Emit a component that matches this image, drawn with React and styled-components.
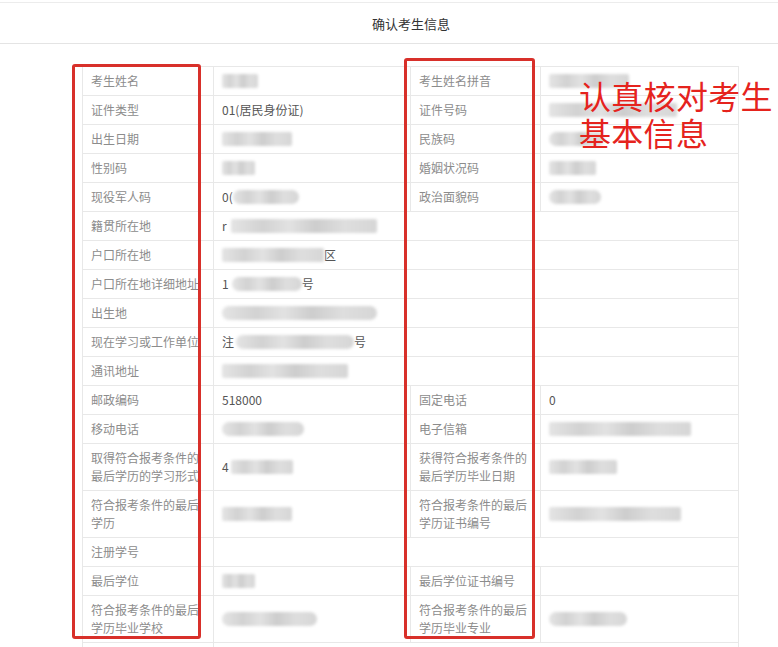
import React from 'react';
import styled, { createGlobalStyle } from 'styled-components';

const GlobalStyle = createGlobalStyle`
  html, body {
    margin: 0;
    padding: 0;
    background: #fff;
    font-family: "Noto Sans CJK SC", "Noto Sans", sans-serif;
  }
  body {
    overflow: hidden;
  }
`;

const Page = styled.div`
  position: relative;
  width: 778px;
  height: 647px;
  overflow: hidden;
  border-top: 1px solid #ececec;
  margin-top: 2px;
`;

const Header = styled.div`
  height: 40px;
  display: flex;
  align-items: center;
  justify-content: center;
  padding-left: 44px;
  border-bottom: 1px solid #e4e4e4;
  font-size: 13px;
  color: #333;
`;

const TableWrap = styled.div`
  padding: 22px 0 0 82px;
`;

const Table = styled.table`
  width: 656px;
  table-layout: fixed;
  border-collapse: collapse;
  border: 1px solid #e8e8e8;
  font-size: 12px;
  line-height: 18px;
`;

const Row = styled.tr`
  height: ${p => (p.$tall ? 47 : 29)}px;
`;

const Cell = styled.td`
  border: 1px solid #e8e8e8;
  padding: 0 10px 0 8px;
  vertical-align: middle;
  color: ${p => (p.$label ? '#8c8c8c' : '#555')};
  white-space: ${p => (p.$label ? 'normal' : 'nowrap')};
  overflow: hidden;
`;

const Blur = styled.span`
  display: inline-block;
  vertical-align: top;
  margin-top: 2px;
  width: ${p => p.$w}px;
  height: 14px;
  margin-left: ${p => p.$ml || 0}px;
  border-radius: ${p => (p.$round ? 8 : 2)}px;
  background: linear-gradient(
    90deg,
    #e4e4e4 0%,
    #d2d2d2 22%,
    #e2e2e2 40%,
    #cdcdcd 58%,
    #dedede 78%,
    #d6d6d6 100%
  );
  filter: blur(1.5px);
`;

const Mark = styled.div`
  position: absolute;
  left: ${p => p.$x}px;
  top: ${p => p.$y}px;
  width: ${p => p.$w}px;
  height: ${p => p.$h}px;
  box-sizing: border-box;
  border: 3px solid #d8302a;
  border-radius: 3px;
  pointer-events: none;
`;

const Note = styled.div`
  position: absolute;
  left: 579px;
  top: 74px;
  font-size: 32px;
  line-height: 37px;
  color: #e5231d;
  letter-spacing: 0.3px;
`;

const B = (w, ml, round) => <Blur $w={w} $ml={ml} $round={round} />;

const rows = [
  ['考生姓名', B(36), '考生姓名拼音', B(80)],
  ['证件类型', '01(居民身份证)', '证件号码', B(128)],
  ['出生日期', B(70), '民族码', B(55, 0, true)],
  ['性别码', B(33), '婚姻状况码', B(47)],
  ['现役军人码', <>0({B(66, 0, true)}</>, '政治面貌码', B(52, 0, true)],
  ['籍贯所在地', <>r{B(146, 4)}</>],
  ['户口所在地', <>{B(102)}区</>],
  ['户口所在地详细地址', <>1{B(70, 3, true)}号</>],
  ['出生地', B(155, 0, true)],
  ['现在学习或工作单位', <>注{B(118, 2, true)}号</>],
  ['通讯地址', B(126)],
  ['邮政编码', '518000', '固定电话', '0'],
  ['移动电话', B(82, 0, true), '电子信箱', B(142)],
  ['取得符合报考条件的最后学历的学习形式', <>4{B(62, 2)}</>, '获得符合报考条件的最后学历毕业日期', B(68), true],
  ['符合报考条件的最后学历', B(70), '符合报考条件的最后学历证书编号', B(132), true],
  ['注册学号', ''],
  ['最后学位', B(33), '最后学位证书编号', ''],
  ['符合报考条件的最后学历毕业学校', B(95, 0, true), '符合报考条件的最后学历毕业专业', B(78, 0, true), true],
  ['', '']
];

export default function App() {
  return (
    <>
      <GlobalStyle />
      <Page>
        <Header>确认考生信息</Header>
        <TableWrap>
          <Table>
            <colgroup>
              <col style={{ width: 131 }} />
              <col style={{ width: 197 }} />
              <col style={{ width: 130 }} />
              <col style={{ width: 198 }} />
            </colgroup>
            <tbody>
              {rows.map((r, i) => (
                <Row key={i} $tall={r[4]}>
                  <Cell $label>{r[0]}</Cell>
                  {r.length > 2 ? (
                    <>
                      <Cell>{r[1]}</Cell>
                      <Cell $label>{r[2]}</Cell>
                      <Cell>{r[3]}</Cell>
                    </>
                  ) : (
                    <Cell colSpan={3}>{r[1]}</Cell>
                  )}
                </Row>
              ))}
            </tbody>
          </Table>
        </TableWrap>
        <Mark $x={72} $y={61} $w={129} $h={575} />
        <Mark $x={404} $y={55} $w={131} $h={581} />
        <Note>
          认真核对考生
          <br />
          基本信息
        </Note>
      </Page>
    </>
  );
}
